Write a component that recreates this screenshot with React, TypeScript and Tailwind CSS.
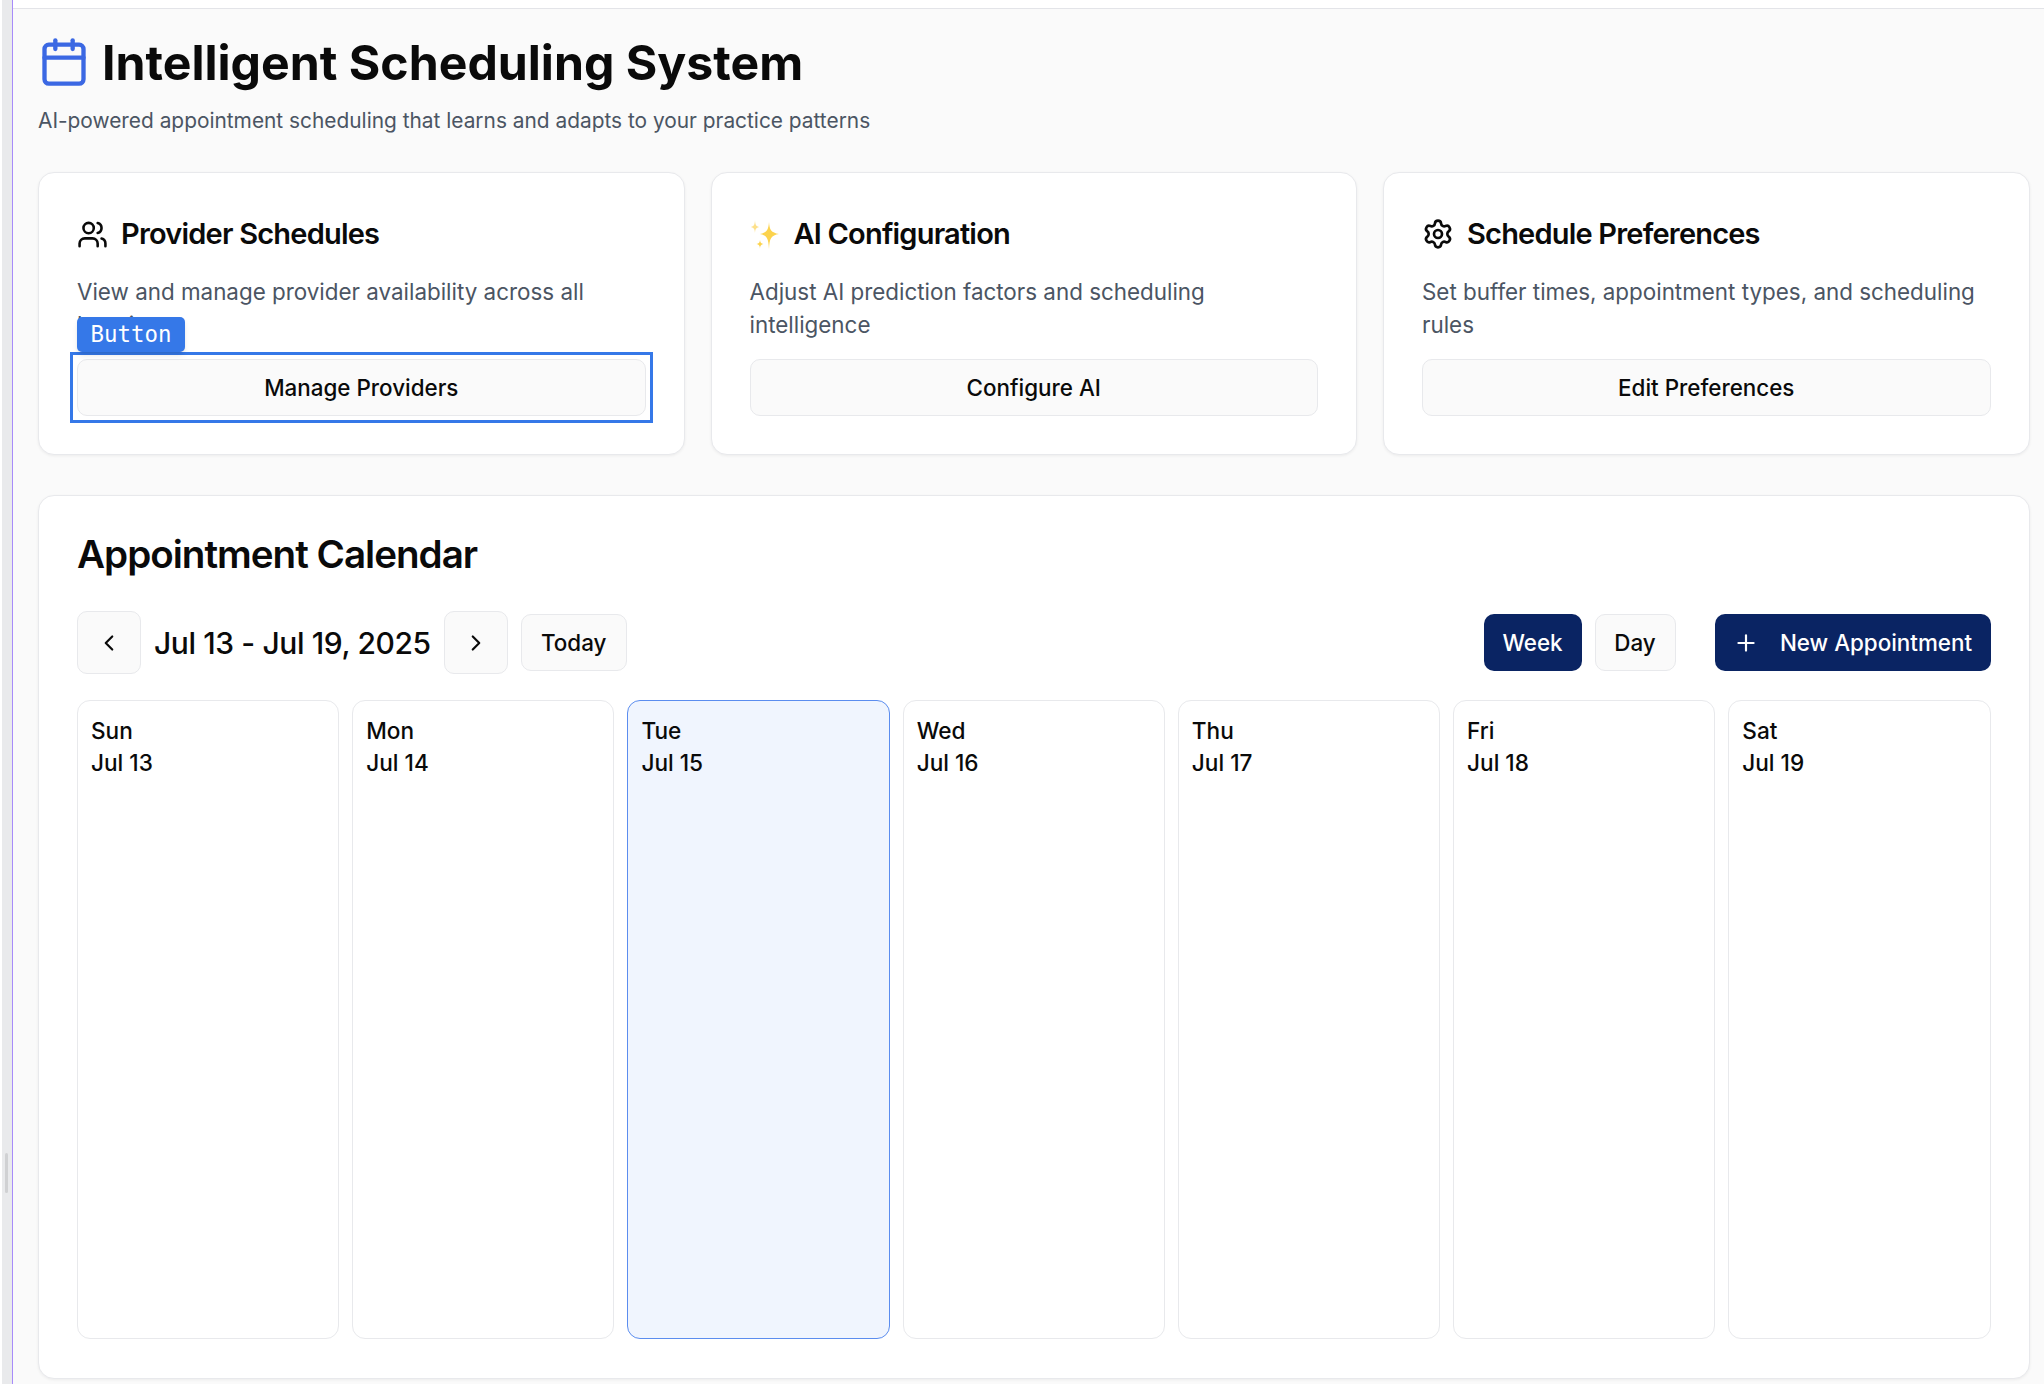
import { Calendar, ChevronLeft, ChevronRight, Plus, Settings, Users } from 'lucide-react';
import type { ReactNode } from 'react';

const days = [
  { name: 'Sun', date: 'Jul 13' },
  { name: 'Mon', date: 'Jul 14' },
  { name: 'Tue', date: 'Jul 15', today: true },
  { name: 'Wed', date: 'Jul 16' },
  { name: 'Thu', date: 'Jul 17' },
  { name: 'Fri', date: 'Jul 18' },
  { name: 'Sat', date: 'Jul 19' },
];

const ghostBtn = 'h-[57px] rounded-[10px] border border-[#e8e9ec] bg-[#fafafa] text-[22.4px] font-medium text-[#0a0a0a]';

function Sparkles() {
  return (
    <svg width="31" height="31" viewBox="0 0 31 31" className="shrink-0">
      <path d="M19 3 C19.6 11 21 13.500 29 15 C21 16.500 19.600 19 19 30 C18.400 19 17 16.500 10 15 C17 13.500 18.400 11 19 3Z" fill="#fcd34d" />
      <path d="M5 1 C5.300 6 6 7 9 8 C6 9 5.300 10 5 14 C4.700 10 4 9 1 8 C4 7 4.700 6 5 1Z" fill="#fde08a" />
      <path d="M10 21 C10.200 23.500 11 24.300 13.500 25 C11 25.700 10.200 26.500 10 30 C9.800 26.500 9 25.700 6.500 25 C9 24.300 9.800 23.500 10 21Z" fill="#fcd34d" />
    </svg>
  );
}

function InfoCard({ icon, title, text, children }: { icon: ReactNode; title: string; text: string; children: ReactNode }) {
  return (
    <div className="rounded-[16px] border border-[#e8e9ec] bg-white p-[38px] shadow-[0_1px_3px_rgba(0,0,0,0.06)]">
      <div className="flex h-[44px] items-center gap-[13px] pt-[2px]">
        {icon}
        <h3 className="text-[29px] font-semibold tracking-[-0.8px] text-[#0a0a0a]">{title}</h3>
      </div>
      <p className="mt-[21px] h-[64px] text-[22.4px] leading-[32.5px] text-[#4b5563]">{text}</p>
      <div className="mt-[19px]">{children}</div>
    </div>
  );
}

export default function App() {
  return (
    <div className="flex h-screen overflow-hidden bg-white font-['Inter',sans-serif]">
      <div className="ml-[2px] w-[10px] shrink-0 bg-[#e9eaec] pt-[1153px] pl-[3px]">
        <div className="h-[40px] w-[3px] rounded-full bg-[#d0d1d3]" />
      </div>
      <div className="w-px shrink-0 bg-[#a78bfa]" />
      <main className="min-w-0 flex-1">
        <div className="h-[8px] bg-white" />
        <div className="h-full border-t border-[#e3e4e8] bg-[#fafafa] pt-[27px] pr-[14.5px] pl-[25px]">
          <div className="flex h-[52px] items-center gap-[12px] pt-[2px]">
            <Calendar size={52} strokeWidth={2} className="-mt-[2px] text-[#3b68e3]" />
            <h1 className="text-[48.2px] font-bold text-[#0a0a0a]">Intelligent Scheduling System</h1>
          </div>
          <p className="mt-[17px] text-[20.87px] leading-[31px] text-[#4b5563]">
            AI-powered appointment scheduling that learns and adapts to your practice patterns
          </p>

          <div className="mt-[36px] grid grid-cols-3 gap-[26px]">
            <InfoCard
              icon={<Users size={31} className="shrink-0 text-[#0a0a0a]" />}
              title="Provider Schedules"
              text="View and manage provider availability across all locations"
            >
              <div className="relative">
                <button className={`w-full ${ghostBtn}`}>Manage Providers</button>
                <div className="absolute -inset-[7px] border-[3px] border-[#3578e8]" />
                <div className="absolute -top-[42px] left-0 flex h-[35px] items-center rounded-[5px] bg-[#3578e8] px-[13.500px] font-['DejaVu_Sans_Mono',monospace] text-[22.4px] text-white shadow-md">
                  Button
                </div>
              </div>
            </InfoCard>
            <InfoCard icon={<Sparkles />} title="AI Configuration" text="Adjust AI prediction factors and scheduling intelligence">
              <button className={`w-full ${ghostBtn}`}>Configure AI</button>
            </InfoCard>
            <InfoCard
              icon={<Settings size={32} className="shrink-0 text-[#0a0a0a]" />}
              title="Schedule Preferences"
              text="Set buffer times, appointment types, and scheduling rules"
            >
              <button className={`w-full ${ghostBtn}`}>Edit Preferences</button>
            </InfoCard>
          </div>

          <section className="mt-[40px] rounded-[16px] border border-[#e8e9ec] bg-white p-[38px] pb-[39px] shadow-[0_1px_3px_rgba(0,0,0,0.06)]">
            <h2 className="text-[38.6px] leading-[40px] font-semibold tracking-[-1px] text-[#0a0a0a]">Appointment Calendar</h2>

            <div className="mt-[37px] flex h-[63px] items-center">
              <button className="flex h-[63px] w-[64px] items-center justify-center rounded-[10px] border border-[#e8e9ec] bg-[#fafafa] text-[#0a0a0a]">
                <ChevronLeft size={26} />
              </button>
              <span className="mx-[13px] pt-[1px] text-[30px] font-medium tracking-[-0.4px] text-[#0a0a0a]">Jul 13 - Jul 19, 2025</span>
              <button className="flex h-[63px] w-[64px] items-center justify-center rounded-[10px] border border-[#e8e9ec] bg-[#fafafa] text-[#0a0a0a]">
                <ChevronRight size={26} />
              </button>
              <button className={`ml-[13px] w-[106px] ${ghostBtn}`}>Today</button>

              <div className="ml-auto flex items-center gap-[13px]">
                <button className="h-[57px] w-[98px] rounded-[10px] bg-[#0a2463] text-[22.4px] font-medium text-white">Week</button>
                <button className={`w-[81px] ${ghostBtn}`}>Day</button>
              </div>
              <button className="ml-[39px] flex h-[57px] w-[276px] items-center justify-center gap-[21px] rounded-[10px] bg-[#0a2463] text-[22.4px] font-medium text-white">
                <Plus size={26} />
                New Appointment
              </button>
            </div>

            <div className="mt-[26px] grid h-[639px] grid-cols-7 gap-[13px]">
              {days.map((d) => (
                <div
                  key={d.name}
                  className={
                    d.today
                      ? 'rounded-[13px] border border-[#5b8def] bg-[#f0f5fe] px-[13px] pt-[14px]'
                      : 'rounded-[13px] border border-[#e8e9ec] bg-white px-[13px] pt-[14px]'
                  }
                >
                  <div className="text-[22.6px] leading-[32px] font-medium text-[#0a0a0a]">{d.name}</div>
                  <div className="text-[22.6px] leading-[32px] font-medium text-[#0a0a0a]">{d.date}</div>
                </div>
              ))}
            </div>
          </section>
        </div>
      </main>
    </div>
  );
}
